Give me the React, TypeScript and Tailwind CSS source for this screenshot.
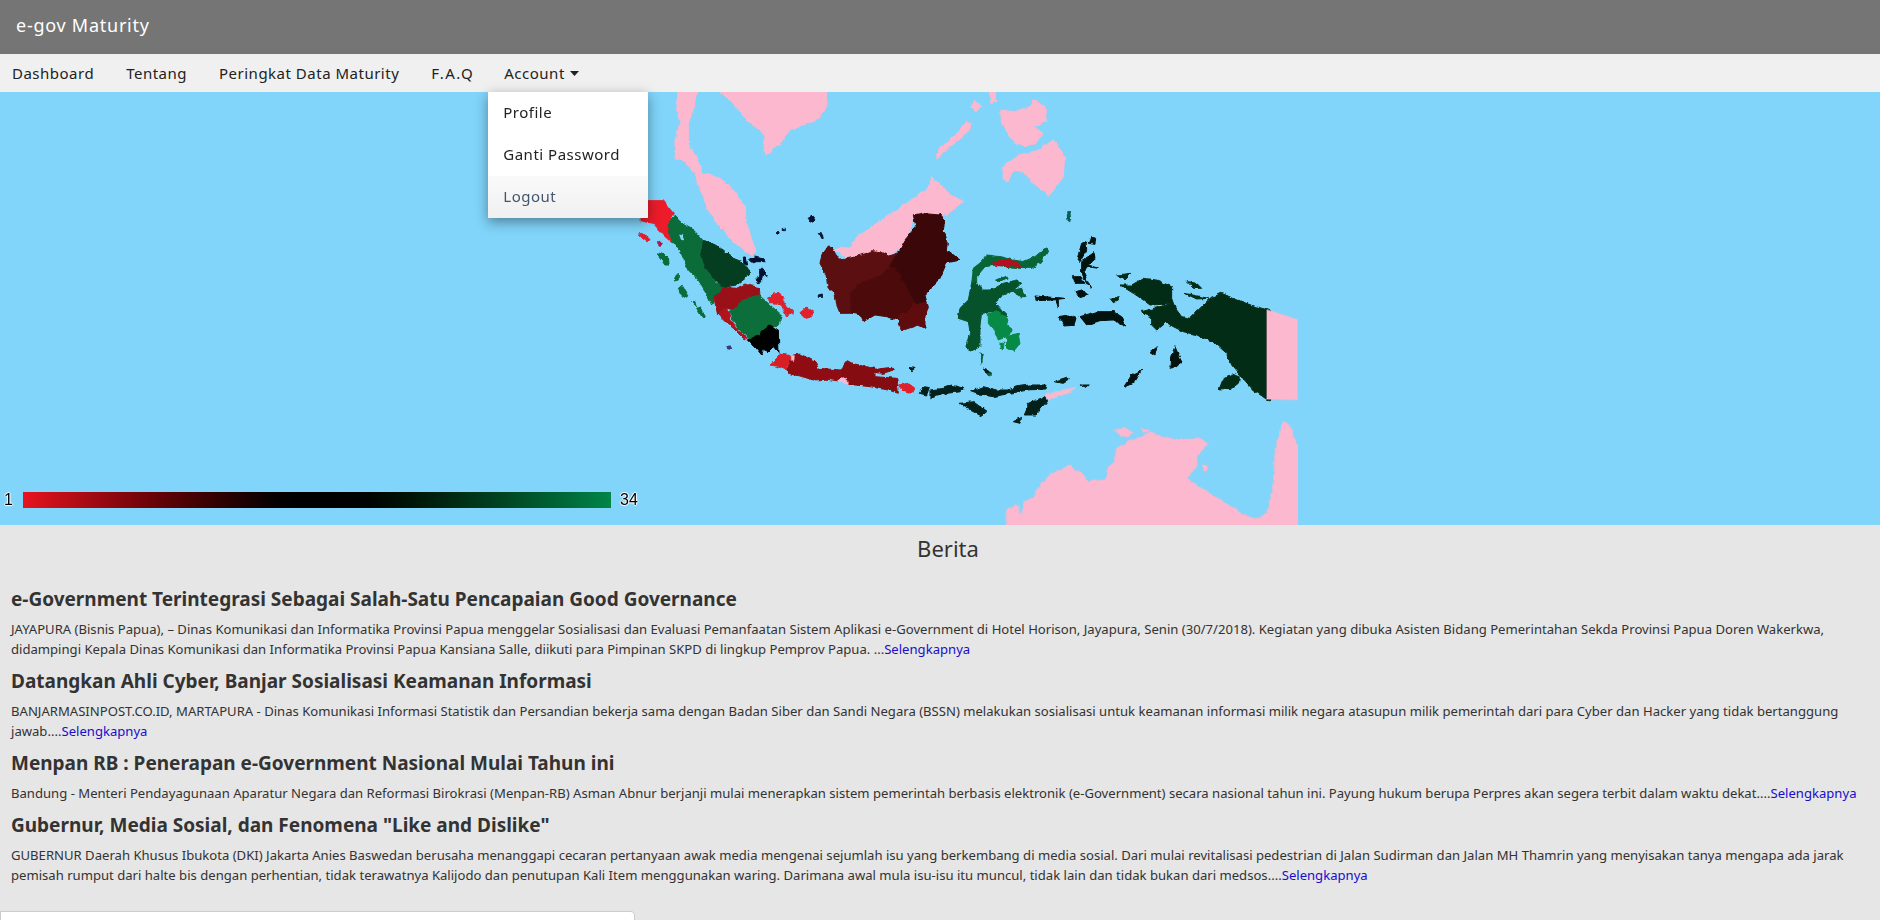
const navItems = ['Dashboard', 'Tentang', 'Peringkat Data Maturity'];

const news = [
  {
    title: 'e-Government Terintegrasi Sebagai Salah-Satu Pencapaian Good Governance',
    lines: [
      'JAYAPURA (Bisnis Papua), – Dinas Komunikasi dan Informatika Provinsi Papua menggelar Sosialisasi dan Evaluasi Pemanfaatan Sistem Aplikasi e-Government di Hotel Horison, Jayapura, Senin (30/7/2018). Kegiatan yang dibuka Asisten Bidang Pemerintahan Sekda Provinsi Papua Doren Wakerkwa,',
      'didampingi Kepala Dinas Komunikasi dan Informatika Provinsi Papua Kansiana Salle, diikuti para Pimpinan SKPD di lingkup Pemprov Papua. ...',
    ],
  },
  {
    title: 'Datangkan Ahli Cyber, Banjar Sosialisasi Keamanan Informasi',
    lines: [
      'BANJARMASINPOST.CO.ID, MARTAPURA - Dinas Komunikasi Informasi Statistik dan Persandian bekerja sama dengan Badan Siber dan Sandi Negara (BSSN) melakukan sosialisasi untuk keamanan informasi milik negara atasupun milik pemerintah dari para Cyber dan Hacker yang tidak bertanggung',
      'jawab....',
    ],
  },
  {
    title: 'Menpan RB : Penerapan e-Government Nasional Mulai Tahun ini',
    lines: [
      'Bandung - Menteri Pendayagunaan Aparatur Negara dan Reformasi Birokrasi (Menpan-RB) Asman Abnur berjanji mulai menerapkan sistem pemerintah berbasis elektronik (e-Government) secara nasional tahun ini. Payung hukum berupa Perpres akan segera terbit dalam waktu dekat....',
    ],
  },
  {
    title: 'Gubernur, Media Sosial, dan Fenomena "Like and Dislike"',
    lines: [
      'GUBERNUR Daerah Khusus Ibukota (DKI) Jakarta Anies Baswedan berusaha menanggapi cecaran pertanyaan awak media mengenai sejumlah isu yang berkembang di media sosial. Dari mulai revitalisasi pedestrian di Jalan Sudirman dan Jalan MH Thamrin yang menyisakan tanya mengapa ada jarak',
      'pemisah rumput dari halte bis dengan perhentian, tidak terawatnya Kalijodo dan penutupan Kali Item menggunakan waring. Darimana awal mula isu-isu itu muncul, tidak lain dan tidak bukan dari medsos....',
    ],
  },
];

const PINK = '#fbb8ce';
const SEA = '#81d4fa';
const NTT = '#03201a';
const MALUKU = '#02120f';
const PAPUA = '#032c17';

// filled with a same coloured stroke so neighbouring provinces have no seams
function P({ c, p, w = 3 }: { c: string; p: string; w?: number }) {
  return <polygon fill={c} stroke={c} strokeWidth={w} strokeLinejoin="round" points={p} />;
}

function IndonesiaMap() {
  return (
    <svg viewBox="0 92 1880 433" className="block h-full w-full">
      <defs>
        <filter id="coast" filterUnits="userSpaceOnUse" x="0" y="70" width="1880" height="480" colorInterpolationFilters="sRGB">
          <feTurbulence type="fractalNoise" baseFrequency="0.18" numOctaves="2" seed="4" />
          <feDisplacementMap in="SourceGraphic" scale="4" xChannelSelector="R" yChannelSelector="G" />
        </filter>
        <clipPath id="mapEdge">
          <rect x="0" y="92" width="1298" height="433" />
        </clipPath>
      </defs>

      <g clipPath="url(#mapEdge)">
        <g filter="url(#coast)">
          {/* neighbours */}
          <g transform="translate(620 90) scale(.3333)">
            <P c={PINK} p="640,478 660,490 680,505 735,490 780,485 805,495 850,470 870,420 885,372 975,375 1030,335 985,310 965,285 935,262 920,300 880,325 845,350 800,380 770,400 710,440 695,470" />
            <P c={PINK} p="175,-20 235,-20 220,60 205,100 205,160 225,195 250,250 300,265 340,300 375,350 380,400 408,485 395,495 350,465 290,400 265,360 245,310 225,250 195,215 165,205 165,150 180,100 170,60" />
            <P c={PINK} p="270,-20 620,-20 620,50 590,90 510,120 470,170 437,195 430,130 380,90 340,40" />
            <P c={PINK} p="1040,95 1055,105 1030,140 985,175 950,205 955,180 1000,140" />
          </g>
          <g transform="translate(620 90) scale(.4592 .3333)">
            <P c={PINK} p="800,-20 815,-20 820,35 810,40" />
            <P c={PINK} p="770,35 785,45 775,65 765,50" />
            <P c={PINK} p="830,60 860,65 890,50 900,30 925,50 930,90 900,110 920,130 905,160 880,170 860,160 850,140 830,90" />
            <P c={PINK} p="835,265 835,230 870,195 905,185 945,150 968,200 965,260 935,315 900,280 880,245 855,240 845,275" />
          </g>
          <g transform="translate(1000 200) scale(.3333)">
            <P c={PINK} p="135,585 225,562 215,575 145,600" />
            <P c={PINK} p="15,1010 20,930 50,915 65,945 75,905 105,890 110,870 150,825 210,795 260,835 265,845 320,840 320,810 345,780 350,745 385,725 425,710 450,695 490,710 530,720 600,715 625,730 590,770 590,800 560,835 620,875 680,910 730,945 770,958 800,940 820,860 825,760 850,665 870,680 893,740 930,800 930,1010" />
            <P c={PINK} p="345,690 375,685 400,695 380,710 360,705" />
            <P c={PINK} p="425,685 450,690 430,697" />
            <P c={PINK} p="605,795 622,795 622,812 610,812" />
          </g>

          {/* sumatra */}
          <g transform="translate(630 190) scale(.3333)">
            <P c="#ec1c2a" p="30,32 100,32 130,70 118,90 125,158 100,135 70,100 30,92" />
            <P c="#0b6b39" p="118,90 135,78 160,100 185,115 205,135 222,155 212,195 225,235 260,280 280,292 252,325 245,345 230,310 205,270 175,240 160,205 145,170 127,158 118,125" />
            <P c={SEA} p="148,135 155,132 162,150 154,150" w={1} />
            <P c="#053d21" p="220,155 245,158 280,180 310,205 335,215 362,245 350,262 320,285 280,292 260,275 225,235 212,195" />
            <P c="#9a1018" p="280,292 320,295 345,282 388,293 390,318 340,330 312,360 290,355 262,370 252,325" />
            <P c="#b01319" p="262,370 290,355 300,385 315,410 355,450 340,445 310,415 285,395" />
            <P c="#0c6e3a" p="295,365 312,358 340,330 390,318 420,345 455,375 445,405 420,410 385,450 355,445 320,410" />
            <P c="#000000" p="355,450 385,435 420,405 445,420 447,490 430,470 415,485 400,478 395,495 375,470" />
            <P c="#e0202c" p="415,325 430,312 450,310 462,335 470,350 490,360 490,370 470,378 455,350 440,340 420,338" />
            <P c="#e0202c" p="510,368 530,352 550,365 545,380 525,385 515,375" />
            <P c="#e0202c" p="25,132 35,130 60,148 55,155 40,148" />
            <P c="#b3124f" p="80,160 90,152 97,160 90,170" />
            <P c="#0b6b39" p="82,195 95,185 115,205 118,225 105,225" />
            <P c="#0b6b39" p="135,260 145,250 145,270 133,273" />
            <P c="#0b6b39" p="145,295 155,287 175,320 165,325 150,310" />
            <P c="#0b6b39" p="185,335 195,335 200,350" />
            <P c="#0b6b39" p="200,355 210,352 226,380 220,387" />
            <P c="#041030" p="340,205 345,200 350,222 342,222" />
            <P c="#041030" p="358,210 375,198 400,205 405,215 380,215 365,220" />
            <P c="#041030" p="385,235 395,235 412,258 395,262 395,275 382,278 378,265 390,258" />
            <P c="#041030" p="535,85 545,75 555,90 545,100" />
            <P c="#041030" p="440,125 447,125 447,133 440,133" />
            <P c="#041030" p="460,115 466,115 466,122 460,122" />
            <P c="#041030" p="568,128 574,128 580,145 575,145" />
            <P c="#041030" p="565,315 577,312 577,322 565,322" />
            <P c="#3b3a78" p="290,470 303,468 305,478 292,476" />
          </g>

          {/* kalimantan */}
          <g transform="translate(800 200) scale(.3333)">
            <P c="#5c0f10" p="85,138 95,140 108,165 125,180 160,172 200,160 215,152 240,155 265,168 295,158 270,195 245,225 180,250 150,280 155,340 120,340 110,315 105,280 85,265 78,225 60,190 65,165" />
            <P c="#4d0a0b" p="150,280 180,250 245,225 270,195 290,205 320,260 345,310 320,340 300,345 295,360 260,350 225,345 190,365 180,345 155,340" />
            <P c="#5f0c0e" p="320,340 345,310 380,305 385,320 375,350 375,385 355,375 305,392 295,360 300,345" />
            <P c="#3b0708" p="340,45 375,38 420,42 435,60 430,90 445,130 442,150 480,180 440,188 420,235 395,260 375,285 380,305 345,310 320,260 290,205 270,195 295,158 315,120 335,95 348,80" />

            {/* sulawesi */}
            <P c="#0a6536" p="520,205 545,185 562,165 600,170 640,180 670,185 705,170 735,145 745,150 725,185 695,205 640,205 590,195 555,200 530,230 530,250 515,250" />
            <P c="#05522b" p="515,250 530,250 550,270 575,270 610,250 650,240 665,250 640,270 610,285 585,305 610,335 625,350 570,335 545,340 540,375 540,440 510,455 498,440 510,395 505,365 475,355 480,325 505,300" />
            <P c="#b50f20" p="578,188 610,178 650,185 670,205 640,197 590,197" />
            <P c="#078a45" p="565,340 590,335 625,355 620,375 640,390 620,410 595,420 585,395 565,370" />
            <P c="#078a45" p="620,410 655,400 660,430 640,455 620,445" />
            <P c="#078a45" p="600,430 612,430 610,447 600,445" />
            <P c="#0a5c33" p="640,270 665,265 675,290 655,290" />
            <P c="#0a5c33" p="590,240 622,228 620,235 595,245" />
            <P c="#0a5c33" p="543,457 550,460 545,490" />
            <P c="#0a5c33" p="550,507 575,520 565,527" />
          </g>

          {/* java + nusa tenggara */}
          <g transform="translate(760 340) scale(.3333)">
            <P c="#d81f26" p="28,75 60,42 100,48 105,60 82,75 78,90 50,78" />
            <P c="#8f0d12" p="85,100 80,90 100,45 120,42 165,65 175,85 245,90 245,110 232,122 200,118 160,120 120,108" />
            <P c="#850c10" p="245,85 262,62 280,72 320,80 345,85 345,110 410,115 415,160 385,150 330,140 285,135 265,135 245,110" />
            <P c="#850c10" p="345,88 395,82 400,90 370,100 345,97" />
            <P c={PINK} p="232,122 250,112 265,125 265,135" w={1} />
            <P c={PINK} p="94,45 104,47 102,62 94,60" w={1} />
            <P c="#e0202c" p="415,135 445,130 465,145 450,160 430,155" />
            <P c={NTT} p="478,160 490,140 508,142 500,165" />
            <P c={NTT} p="510,150 550,145 575,135 612,145 600,155 560,160 510,175" />
            <P c={NTT} p="632,155 670,140 710,150 745,150 770,140 810,135 858,135 855,147 800,150 750,160 700,170 660,165" />
            <P c={NTT} p="600,190 640,185 680,215 665,228 630,210" />
            <P c={NTT} p="790,225 805,190 855,170 860,185 825,225" />
            <P c={NTT} p="760,245 785,232 780,250" />
            <P c={NTT} p="880,125 920,112 930,118 910,130" />
            <P c={NTT} p="960,135 988,135 980,142" />
            <P c={NTT} p="445,82 465,85 455,92" />
            <P c={NTT} p="670,88 695,95 680,98" />
          </g>

          {/* maluku + papua */}
          <g transform="translate(1000 200) scale(.3333)">
            <P c={PAPUA} p="360,255 380,255 395,255 430,235 470,240 515,260 515,295 520,310 500,312 450,315 430,300 400,280" />
            <P c={PAPUA} p="425,335 480,320 500,315 520,310 530,330 545,350 570,355 590,335 610,315 630,295 665,280 700,295 760,318 812,332 812,600 800,598 760,570 715,520 695,495 680,460 640,425 590,405 550,395 520,380 495,365 490,375 470,390 455,375 455,350 435,345" />
            <P c={PAPUA} p="658,567 670,535 700,522 718,530 715,550 695,565" />
            <P c={PAPUA} p="350,225 395,220 375,240" />
            <P c={PAPUA} p="330,295 358,290 358,300 340,308" />
            <P c={PAPUA} p="562,245 590,250 605,265 580,265" />
            <P c={PAPUA} p="555,280 625,295 590,297" />
            <P c={MALUKU} p="512,470 525,440 540,475 545,485 530,500 510,505" />
            <P c={MALUKU} p="240,350 290,335 340,335 365,350 378,378 340,360 300,362 260,375 250,362" />
            <P c={MALUKU} p="175,350 205,345 228,355 222,375 195,378" />
            <P c={MALUKU} p="105,288 195,295 160,300 110,302" />
            <P c={MALUKU} p="168,302 175,300 175,322" />
            <P c={MALUKU} p="232,175 245,130 258,125 260,150 240,185" />
            <P c={MALUKU} p="273,110 287,115 285,133 265,130" />
            <P c={MALUKU} p="245,185 285,155 288,175 265,195 295,205 262,200 250,215 270,260 272,265 245,225" />
            <P c={MALUKU} p="217,230 240,230 255,250 225,250" />
            <P c={MALUKU} p="228,275 245,270 265,285 240,293" />
            <P c={MALUKU} p="372,560 395,525 425,510 405,545" />
            <P c={MALUKU} p="450,455 472,437 465,465" />
            <P c="#0a5c50" p="200,35 210,35 212,60 205,65" />
          </g>
        </g>

        {/* papua new guinea, its border is a ruled line */}
        <g transform="translate(1000 200) scale(.3333)">
          <polygon fill={PINK} points="800,328 893,358 893,600 800,598" />
        </g>
      </g>
    </svg>
  );
}

export default function App() {
  return (
    <div className="h-[920px] overflow-hidden bg-[#e6e6e6] font-['Noto_Sans',sans-serif] text-[#333]">
      <header className="flex h-[54px] items-center bg-[#757575] px-4 pb-[4px] text-[18px] tracking-[0.75px] text-white">e-gov Maturity</header>

      <nav className="relative z-20 flex h-[38px] items-center gap-[32px] bg-[#f0f0f0] pl-3 text-[15px] tracking-[0.5px] text-[#222]">
        {navItems.map((item) => (
          <span key={item}>{item}</span>
        ))}
        <span className="tracking-[1.5px]">F.A.Q</span>
        <div className="relative ml-[-2px] flex items-center self-stretch">
          Account
          <svg viewBox="0 0 9 5" className="ml-[5px] h-[5px] w-[9px]">
            <polygon points="0,0 9,0 4.5,5" fill="#222" />
          </svg>
          <div className="absolute left-[-16px] top-full w-[160px] bg-white shadow-[0_4px_12px_rgba(0,0,0,0.4)]">
            <div className="flex h-[42px] items-center px-[15px] pb-[1px]">Profile</div>
            <div className="flex h-[42px] items-center px-[15px] pb-[1px]">Ganti Password</div>
            <div className="flex h-[42px] items-center bg-gradient-to-b from-[#fafafa] to-[#f0f0f0] px-[15px] pb-[1px] text-[#44566c]">Logout</div>
          </div>
        </div>
      </nav>

      <section className="relative h-[433px] bg-[#81d4fa]">
        <IndonesiaMap />
        <div className="absolute left-[4px] top-[396px] flex items-center font-['Liberation_Sans',sans-serif] text-[16px] text-black [text-shadow:1px_0_1px_#fff,-1px_0_1px_#fff,0_1px_1px_#fff,0_-1px_1px_#fff]">
          <span className="w-[19px]">1</span>
          <div className="h-[16px] w-[588px] bg-gradient-to-r from-[#e8131f] via-black to-[#008548]" />
          <span className="ml-[9px]">34</span>
        </div>
      </section>

      <main className="px-[11px]">
        <h3 className="pt-[6px] pl-[16px] text-center text-[22px] leading-[34px]">Berita</h3>
        <div className="mt-[18px] flex flex-col gap-[6px]">
          {news.map((n) => (
            <article key={n.title}>
              <h4 className="text-[19px] leading-[32px] font-bold">{n.title}</h4>
              <p className="mt-[4px] text-[13.1px] leading-[20px] whitespace-nowrap">
                {n.lines.map((line, i) => (
                  <span key={i}>
                    {line}
                    {i < n.lines.length - 1 ? <br /> : <a className="text-[#1a0dcc]">Selengkapnya</a>}
                  </span>
                ))}
              </p>
            </article>
          ))}
        </div>
      </main>

      <div className="mt-[26px] h-[40px] w-[635px] rounded-tr border border-[#ccc] bg-white" />
    </div>
  );
}
